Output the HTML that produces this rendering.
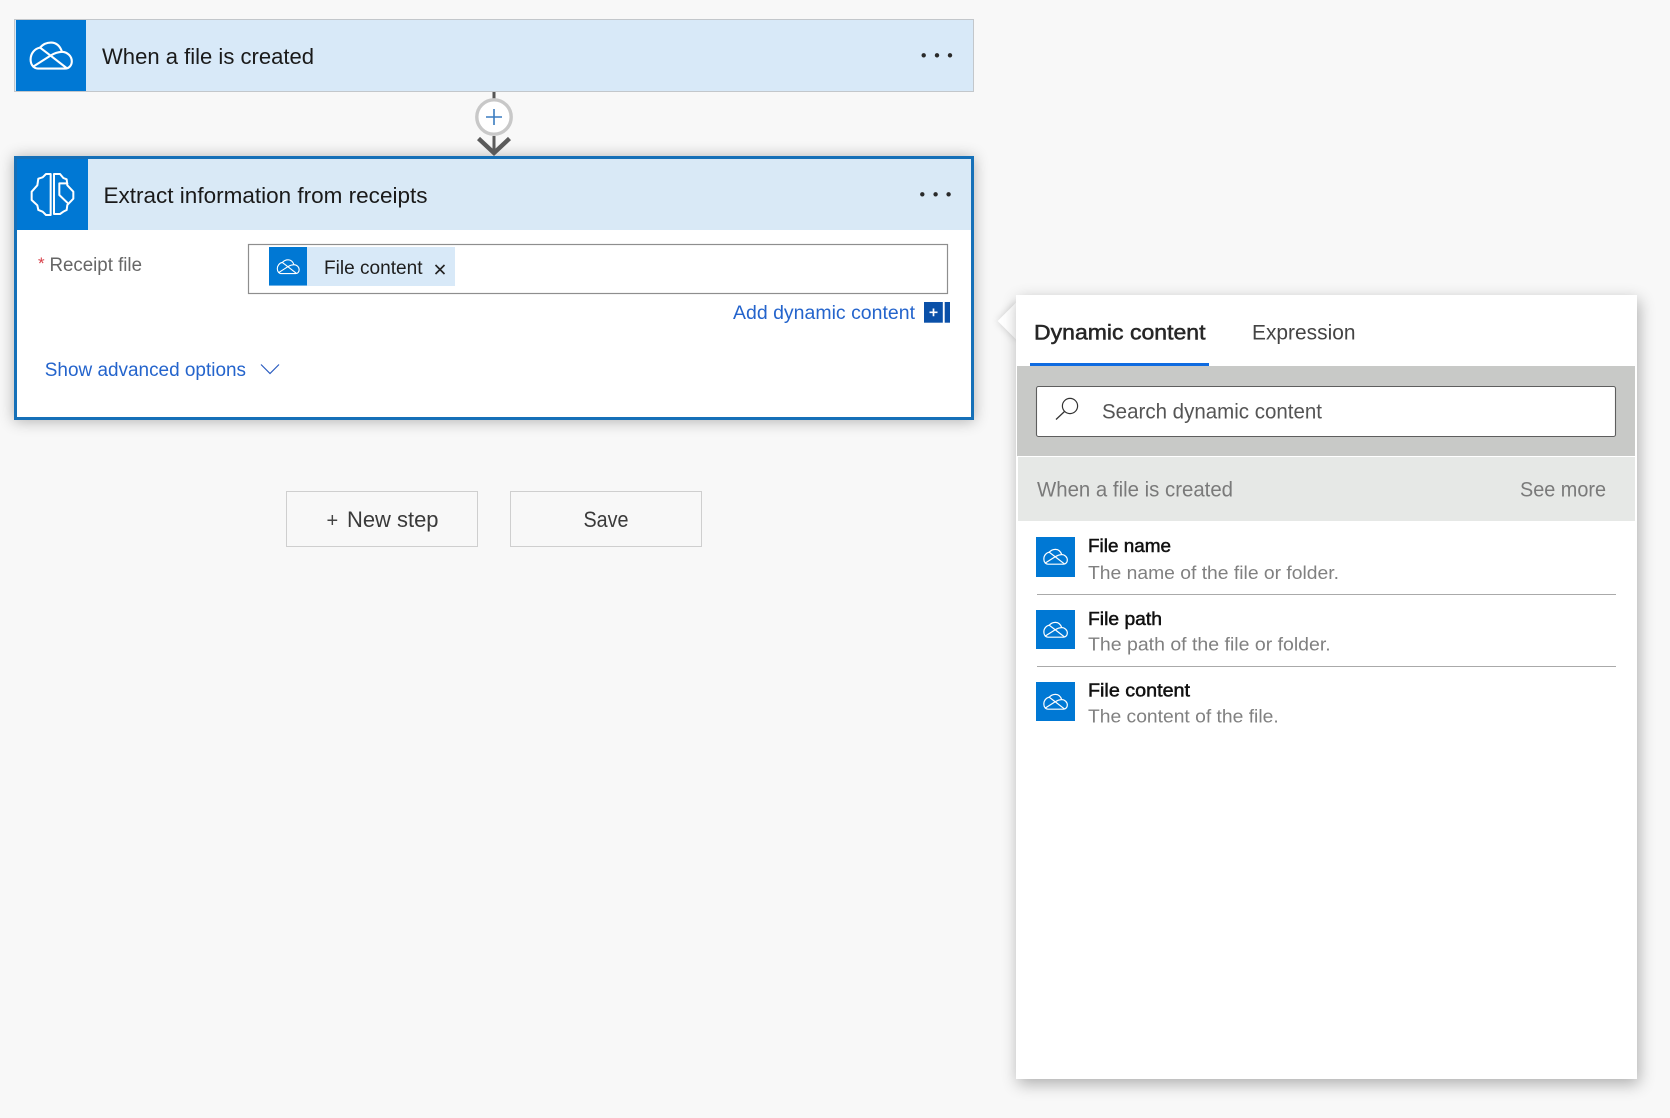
<!DOCTYPE html>
<html><head><meta charset="utf-8"><title>Flow</title>
<style>
html,body{margin:0;padding:0;width:1670px;height:1118px;overflow:hidden;background:#f8f8f8}
.b{position:absolute;box-sizing:border-box}
svg{position:absolute;left:0;top:0}
text{font-family:"Liberation Sans",sans-serif}
</style></head><body>
<div class="b" style="left:14px;top:156px;width:960px;height:264px;background:#fff;box-shadow:0 1px 14px rgba(0,0,0,.3)"></div>
<div class="b" style="left:1003px;top:308px;width:26px;height:26px;background:#fff;transform:rotate(45deg);box-shadow:0 0 8px rgba(0,0,0,.18)"></div>
<div class="b" style="left:1016px;top:295px;width:621px;height:784px;background:#fff;box-shadow:2px 5px 15px rgba(0,0,0,.3)"></div>
<svg width="1670" height="1118" viewBox="0 0 1670 1118">
<defs>
<g id="c" fill="none" stroke="#fff" stroke-width="2.1" stroke-linejoin="round" stroke-linecap="round">
<path d="M8 26.6H35C39 26.6 41.8 23.4 41.8 19.4C41.8 14.4 37.6 10 32 9.8C30 4 26.5 .6 21 .6C16 .6 12.5 2.8 10 5.6C4.6 6.6 .6 11.5 .6 17.5C.6 23 4 26.6 8 26.6Z"/>
<path d="M3.2 24.6L20.5 13.6C24 11.4 28 10 32 9.8"/><path d="M10 5.6L20.5 13.6L36.5 26"/>
</g>
</defs>
<!-- card 1 -->
<rect x="14.5" y="19.5" width="959" height="72" fill="#d8e9f8" stroke="#c3c7cb"/>
<rect x="16" y="20" width="70" height="71" fill="#0078d4"/>
<use href="#c" transform="translate(30,42)"/>
<text x="102" y="64" font-size="22" fill="#1a1a1a" textLength="212" lengthAdjust="spacingAndGlyphs">When a file is created</text>
<circle cx="923.7" cy="55.3" r="2.2" fill="#2a2a2a"/><circle cx="937" cy="55.3" r="2.2" fill="#2a2a2a"/><circle cx="950" cy="55.3" r="2.2" fill="#2a2a2a"/>
<!-- connector -->
<rect x="492.5" y="92" width="3" height="9" fill="#555"/>
<circle cx="494" cy="117" r="17.2" fill="#fff" stroke="#c8c8c8" stroke-width="3.4"/>
<path d="M486 117H502M494 109V125" stroke="#3a7cc0" stroke-width="1.6" fill="none"/>
<path d="M494 136V153" stroke="#5a5a5a" stroke-width="3" fill="none"/>
<!-- card 2 -->
<rect x="15.5" y="157.5" width="957" height="261" fill="#fff" stroke="#1570b8" stroke-width="3"/>
<rect x="17" y="159" width="954" height="71" fill="#d9e9f6"/>
<rect x="17" y="159" width="71" height="71" fill="#0078d4"/>
<path d="M478.5 138.5L494 153L509.5 138.5" stroke="#5a5a5a" stroke-width="4.4" fill="none"/>
<g transform="translate(10,150) scale(.3333)" fill="none" stroke="#fff" stroke-width="6" stroke-linejoin="round" stroke-linecap="round">
<path d="M122 72H108L98 82L85 86L82 106L65 125V150L82 166L85 180L98 185L108 195H122Z"/>
<path d="M132 72V192H150L160 185L170 180L172 165L190 146V125L172 106L170 88L160 84L150 72Z"/>
<path d="M172 100H148V135L172 158"/>
</g>
<text x="103.5" y="203" font-size="22" fill="#1a1a1a" textLength="324" lengthAdjust="spacingAndGlyphs">Extract information from receipts</text>
<circle cx="922.3" cy="194.3" r="2.2" fill="#2a2a2a"/><circle cx="935.6" cy="194.3" r="2.2" fill="#2a2a2a"/><circle cx="948.6" cy="194.3" r="2.2" fill="#2a2a2a"/>
<text x="38" y="269" font-size="17" fill="#d8404a">*</text>
<text x="49.5" y="271" font-size="19" fill="#666" textLength="92.5" lengthAdjust="spacingAndGlyphs">Receipt file</text>
<rect x="248.5" y="244.5" width="699" height="49" fill="#fff" stroke="#8e8e8e" stroke-width="1.2"/>
<rect x="269" y="247" width="186" height="39" fill="#d8e9f8"/>
<rect x="269" y="247" width="38" height="38.5" fill="#0078d4"/>
<use href="#c" transform="translate(277,259.5) scale(.53)"/>
<text x="324" y="274" font-size="19" fill="#1e1e1e" textLength="98.5" lengthAdjust="spacingAndGlyphs">File content</text>
<path d="M435.5 265L444.5 274M444.5 265L435.5 274" stroke="#222" stroke-width="1.6" fill="none"/>
<text x="733" y="319" font-size="19" fill="#2464cc" textLength="182" lengthAdjust="spacingAndGlyphs">Add dynamic content</text>
<rect x="924" y="302" width="18.8" height="20.7" fill="#0a50a8"/>
<rect x="944.7" y="302" width="5.3" height="20.7" fill="#0a50a8"/>
<path d="M929.5 312.3H937.5M933.5 308.5V316.3" stroke="#fff" stroke-width="1.7" fill="none"/>
<text x="44.8" y="376" font-size="19" fill="#2464cc" textLength="201.2" lengthAdjust="spacingAndGlyphs">Show advanced options</text>
<path d="M261 364.5L270 373.5L279 364.5" stroke="#2a5cc0" stroke-width="1.2" fill="none"/>
<!-- buttons -->
<rect x="286.5" y="491.5" width="191" height="55" fill="none" stroke="#cfcfcf"/>
<rect x="510.5" y="491.5" width="191" height="55" fill="none" stroke="#cfcfcf"/>
<text x="326.5" y="527" font-size="20" fill="#444">+</text>
<text x="347" y="527" font-size="22" fill="#3a3a3a" textLength="91.5" lengthAdjust="spacingAndGlyphs">New step</text>
<text x="583.5" y="527" font-size="22" fill="#3a3a3a" textLength="45" lengthAdjust="spacingAndGlyphs">Save</text>
<!-- panel -->
<text x="1034" y="339.5" font-size="21" fill="#262626" stroke="#262626" stroke-width=".5" textLength="171.5" lengthAdjust="spacingAndGlyphs">Dynamic content</text>
<text x="1252" y="339.5" font-size="21" fill="#444" textLength="103.5" lengthAdjust="spacingAndGlyphs">Expression</text>
<rect x="1030" y="363" width="179" height="3" fill="#0f6be0"/>
<rect x="1017" y="366" width="618" height="90" fill="#c8c9c7"/>
<rect x="1036.5" y="386.5" width="579" height="50" rx="2" fill="#fff" stroke="#5e5e5e" stroke-width="1.1"/>
<circle cx="1070" cy="406" r="7.6" fill="none" stroke="#333" stroke-width="1.2"/>
<path d="M1064.5 411.5L1056 419.5" stroke="#333" stroke-width="1.3" fill="none"/>
<text x="1102" y="418.7" font-size="21" fill="#555" textLength="220" lengthAdjust="spacingAndGlyphs">Search dynamic content</text>
<rect x="1018" y="457" width="617" height="64" fill="#e6e8e6"/>
<text x="1037" y="496.7" font-size="21" fill="#7a7a7a" textLength="196" lengthAdjust="spacingAndGlyphs">When a file is created</text>
<text x="1520" y="496.7" font-size="21" fill="#7a7a7a" textLength="86" lengthAdjust="spacingAndGlyphs">See more</text>
<!-- items -->
<rect x="1036" y="537" width="39" height="40" fill="#0078d4"/><use href="#c" transform="translate(1043.5,549) scale(.57)"/>
<text x="1088" y="552" font-size="18.5" fill="#111" stroke="#111" stroke-width=".5" textLength="83" lengthAdjust="spacingAndGlyphs">File name</text>
<text x="1088" y="579" font-size="18.5" fill="#808080" textLength="251" lengthAdjust="spacingAndGlyphs">The name of the file or folder.</text>
<rect x="1037" y="594" width="579" height="1" fill="#aaa"/>
<rect x="1036" y="610" width="39" height="39" fill="#0078d4"/><use href="#c" transform="translate(1043.5,622) scale(.57)"/>
<text x="1088" y="625" font-size="18.5" fill="#111" stroke="#111" stroke-width=".5" textLength="74" lengthAdjust="spacingAndGlyphs">File path</text>
<text x="1088" y="650.7" font-size="18.5" fill="#808080" textLength="242.7" lengthAdjust="spacingAndGlyphs">The path of the file or folder.</text>
<rect x="1037" y="666" width="579" height="1" fill="#aaa"/>
<rect x="1036" y="682" width="39" height="39" fill="#0078d4"/><use href="#c" transform="translate(1043.5,694) scale(.57)"/>
<text x="1088" y="696.7" font-size="18.5" fill="#111" stroke="#111" stroke-width=".5" textLength="102" lengthAdjust="spacingAndGlyphs">File content</text>
<text x="1088" y="722.3" font-size="18.5" fill="#808080" textLength="190.7" lengthAdjust="spacingAndGlyphs">The content of the file.</text>
</svg>
</body></html>
